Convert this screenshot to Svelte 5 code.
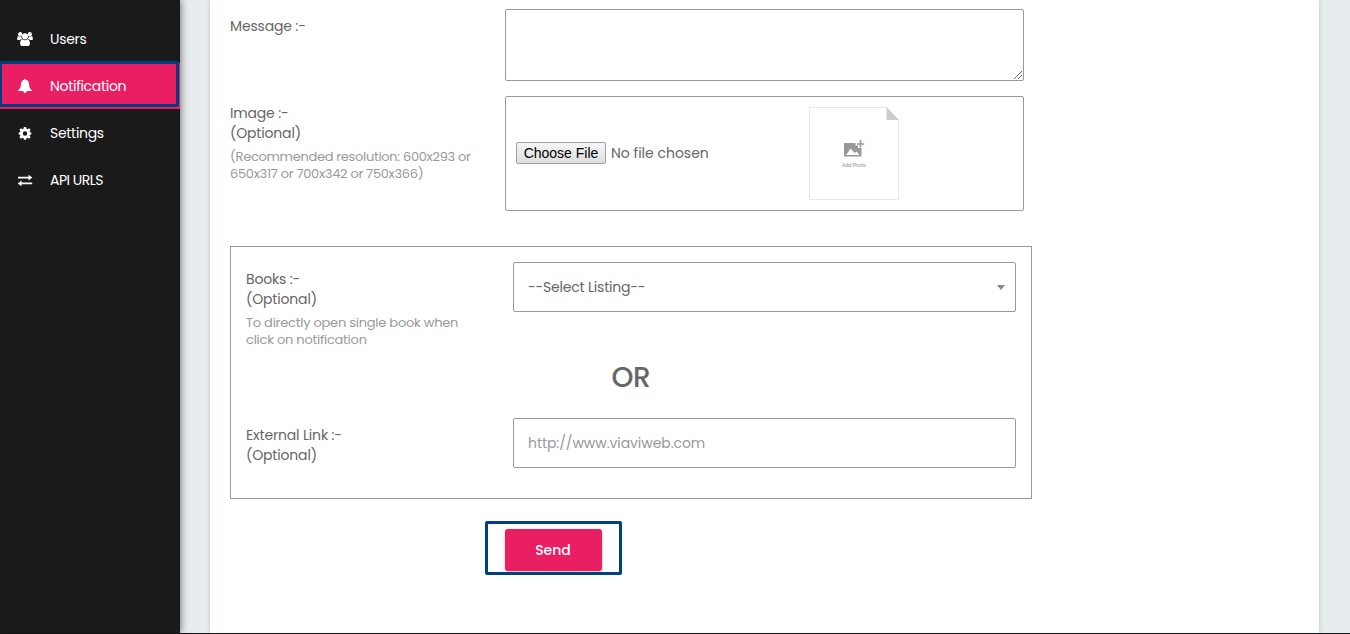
<script>
  const menu = [
    { id: 'users', label: 'Users' },
    { id: 'notification', label: 'Notification', active: true },
    { id: 'settings', label: 'Settings' },
    { id: 'api', label: 'API URLS' }
  ];
</script>

<div class="page">
  <div class="layout">
    <nav class="sidebar">
      {#each menu as item (item.id)}
        <div class="item {item.id}" class:active={item.active}>
          <svg class="icon" width="16" height="16" viewBox="0 0 16 16" fill="#fff">
            {#if item.id === 'users'}
              <circle cx="3.2" cy="3.2" r="2.1" />
              <circle cx="12.8" cy="3.2" r="2.1" />
              <path d="M.2 8.4V7.3Q.2 4.9 1.6 4.9Q3.2 6 4.2 5.3Q4.2 7 5.2 8Q3.6 8 2.8 9H1.3Q.2 9 .2 8.4ZM15.8 8.4V7.3Q15.8 4.9 14.4 4.9Q12.8 6 11.8 5.3Q11.8 7 10.8 8Q12.4 8 13.2 9H14.7Q15.8 9 15.8 8.4Z" />
              <circle cx="8" cy="5.3" r="3.1" />
              <path d="M3.1 12.7Q3.1 8.5 5.6 8.3Q8 10.2 10.4 8.3Q12.9 8.5 12.9 12.7Q12.9 15 11 15H5Q3.1 15 3.1 12.7Z" />
            {:else if item.id === 'notification'}
              <path d="M7.2 1.8Q7 .8 8 .8T8.8 1.8Q12 2.5 12 6Q12 10.5 15 12.2Q14.8 13.1 14 13.1H9.8Q9.6 15 8 15T6.2 13.1H2Q1.2 13.1 1 12.2Q4 10.5 4 6Q4 2.5 7.2 1.8Z" />
            {:else if item.id === 'settings'}
              <path fill-rule="evenodd" d="M6.9 2H9.1L9.5 3.8L10.4 4.2L12 3.2L13.6 4.8L12.6 6.4L12.9 7.2L14.3 7.5V9.5L12.9 9.8L12.6 10.6L13.6 12.2L12 13.8L10.4 12.8L9.5 13.2L9.1 14.7H6.9L6.5 13.2L5.6 12.8L4 13.8L2.4 12.2L3.4 10.6L3.1 9.8L1.7 9.5V7.5L3.1 7.2L3.4 6.4L2.4 4.8L4 3.2L5.6 4.2L6.5 3.8ZM8 6.3A2.2 2.2 0 1 0 8 10.7A2.2 2.2 0 1 0 8 6.3Z" />
            {:else}
              <path d="M1 4.7H11.5V2.7L15.3 5.6L11.5 8.5V6.5H1ZM15.2 10.5H4.5V8.5L.8 11.4L4.5 14.3V12.3H15.2Z" />
            {/if}
          </svg>
          <span>{item.label}</span>
        </div>
      {/each}
      <div class="frame menu-frame"></div>
    </nav>

    <main class="card">
      <div class="row message">
        <div class="label"><span>Message :-</span></div>
        <div class="box textarea">
          <svg width="10" height="10" viewBox="0 0 10 10" stroke="#666" stroke-width="1"><path d="M1 9L9 1M5 9L9 5" /></svg>
        </div>
      </div>

      <div class="row image">
        <div class="label">
          <span>Image :-</span><br /><span>(Optional)</span>
          <p class="help"><span class="tight">(Recommended resolution: 600x293 or</span><br /><span class="tight">650x317 or 700x342 or 750x366)</span></p>
        </div>
        <div class="box upload">
          <div class="file"><span class="choose">Choose File</span><span>No file chosen</span></div>
          <svg class="thumb" width="90" height="93" viewBox="0 0 90 93">
            <path d="M77.5 .5H.5V92.5H89.5V13" fill="none" stroke="#e7e7e7" />
            <path d="M77.5 0L90 13H77.5Z" fill="#ccc" />
            <path fill-rule="evenodd" fill="#999" d="M35 36H46.5V38.5H49V41H52.5V49.5H35ZM37 48H50.5L47.5 44.5L45.5 46L41.7 41.5Z" />
            <path d="M51.5 33V40.5M48 37H55.3" stroke="#999" stroke-width="1.6" />
            <text x="33" y="60.2" textLength="24" lengthAdjust="spacingAndGlyphs" font-size="5" fill="#888">Add Photo</text>
          </svg>
        </div>
      </div>

      <section class="group">
        <div class="row books">
          <div class="label">
            <span>Books :-</span><br /><span>(Optional)</span>
            <p class="help"><span>To directly open single book when</span><br /><span>click on notification</span></p>
          </div>
          <div class="box select"><span>--Select Listing--</span><i class="caret"></i></div>
        </div>
        <h2>OR</h2>
        <div class="row link">
          <div class="label"><span>External Link :-</span><br /><span>(Optional)</span></div>
          <div class="box input"><span>http://www.viaviweb.com</span></div>
        </div>
      </section>

      <div class="actions">
        <div class="send">Send<div class="frame send-frame"></div></div>
      </div>
    </main>
  </div>
  <div class="edge"></div>
</div>

<style>
  :global(body) { margin: 0; overflow: hidden; }
  .page {
    width: 1350px; height: 634px; display: flex; flex-direction: column; overflow: hidden;
    font-family: Poppins, Inter, "Open Sans", sans-serif; font-size: 14px; line-height: 20px;
    color: #666; background: #e7ecef; white-space: nowrap;
  }
  .page * { box-sizing: border-box; }
  .layout { display: flex; height: 633px; }
  .edge { height: 1px; background: #17151a; }
  .sidebar {
    position: relative; z-index: 1; width: 180px; padding-top: 16px; background: #1a1a1a;
    box-shadow: 0 0 8px rgba(0, 0, 0, .6);
  }
  .item {
    height: 47px; padding: 0 17px 1px; display: flex; align-items: center; gap: 17px;
    color: #fff; font-size: 14px; line-height: 44px; letter-spacing: -.3px;
  }
  .item.active { background: #e91e63; height: 46px; margin-bottom: 1px; padding-bottom: 0; line-height: 46px; }
  .icon { flex: none; }
  .item.api span { letter-spacing: -.5px; }
  .frame { position: absolute; border: 3px solid #00407f; border-radius: 2px; }
  .menu-frame { left: -1px; top: 61px; width: 180px; height: 46px; }
  .card {
    width: 1109px; margin-left: 30px; padding: 9px 0 0 20px; background: #fff;
    box-shadow: 0 0 5px rgba(0, 0, 0, .18);
  }
  .row { display: flex; }
  .label { width: 275px; padding-top: 7px; letter-spacing: -.17px; }
  .help { margin: 5px 0 0; font-size: 13px; line-height: 17px; color: #999; letter-spacing: -.24px; }
  .help .tight { letter-spacing: -.31px; }
  .box { border: 1px solid #999; border-radius: 2px; background: #fff; }
  .textarea { width: 519px; height: 72px; display: flex; justify-content: flex-end; align-items: flex-end; }
  .image { margin-top: 15px; }
  .upload { width: 519px; height: 115px; padding: 0 124px 0 10px; display: flex; align-items: center; justify-content: space-between; }
  .file { display: flex; align-items: center; gap: 5px; padding-bottom: 2px; }
  .choose {
    width: 90px; height: 22px; border: 1px solid #a0a0a0; border-radius: 2px; text-align: center;
    background: linear-gradient(#f6f6f6, #dedede); color: #000;
    font: 14px/20px "Liberation Sans", Arial, sans-serif;
  }
  .group { width: 802px; height: 253px; margin-top: 35px; padding: 15px; border: 1px solid #999; }
  .group .label { width: 267px; }
  .select, .input { width: 503px; height: 50px; padding: 0 14px; display: flex; align-items: center; justify-content: space-between; }
  .select { padding-right: 10px; letter-spacing: -.2px; }
  .input { color: #999; letter-spacing: -.07px; }
  .caret { border: 4px solid transparent; border-top: 5px solid #888; border-bottom: 0; }
  .books { height: 100px; }
  h2 { margin: 0; height: 56px; line-height: 32px; font-size: 28px; font-weight: 500; text-align: center; letter-spacing: -.3px; }
  .actions { display: flex; padding: 30px 0 0 275px; }
  .send {
    position: relative; width: 97px; height: 42px; border-radius: 3px; background: #e91e63; color: #fff;
    font-size: 14px; font-weight: 500; line-height: 42px; text-align: center; text-indent: -1px; box-shadow: 0 1px 3px rgba(0, 0, 0, .3);
  }
  .send-frame { left: -20px; top: -8px; width: 137px; height: 54px; }
</style>
